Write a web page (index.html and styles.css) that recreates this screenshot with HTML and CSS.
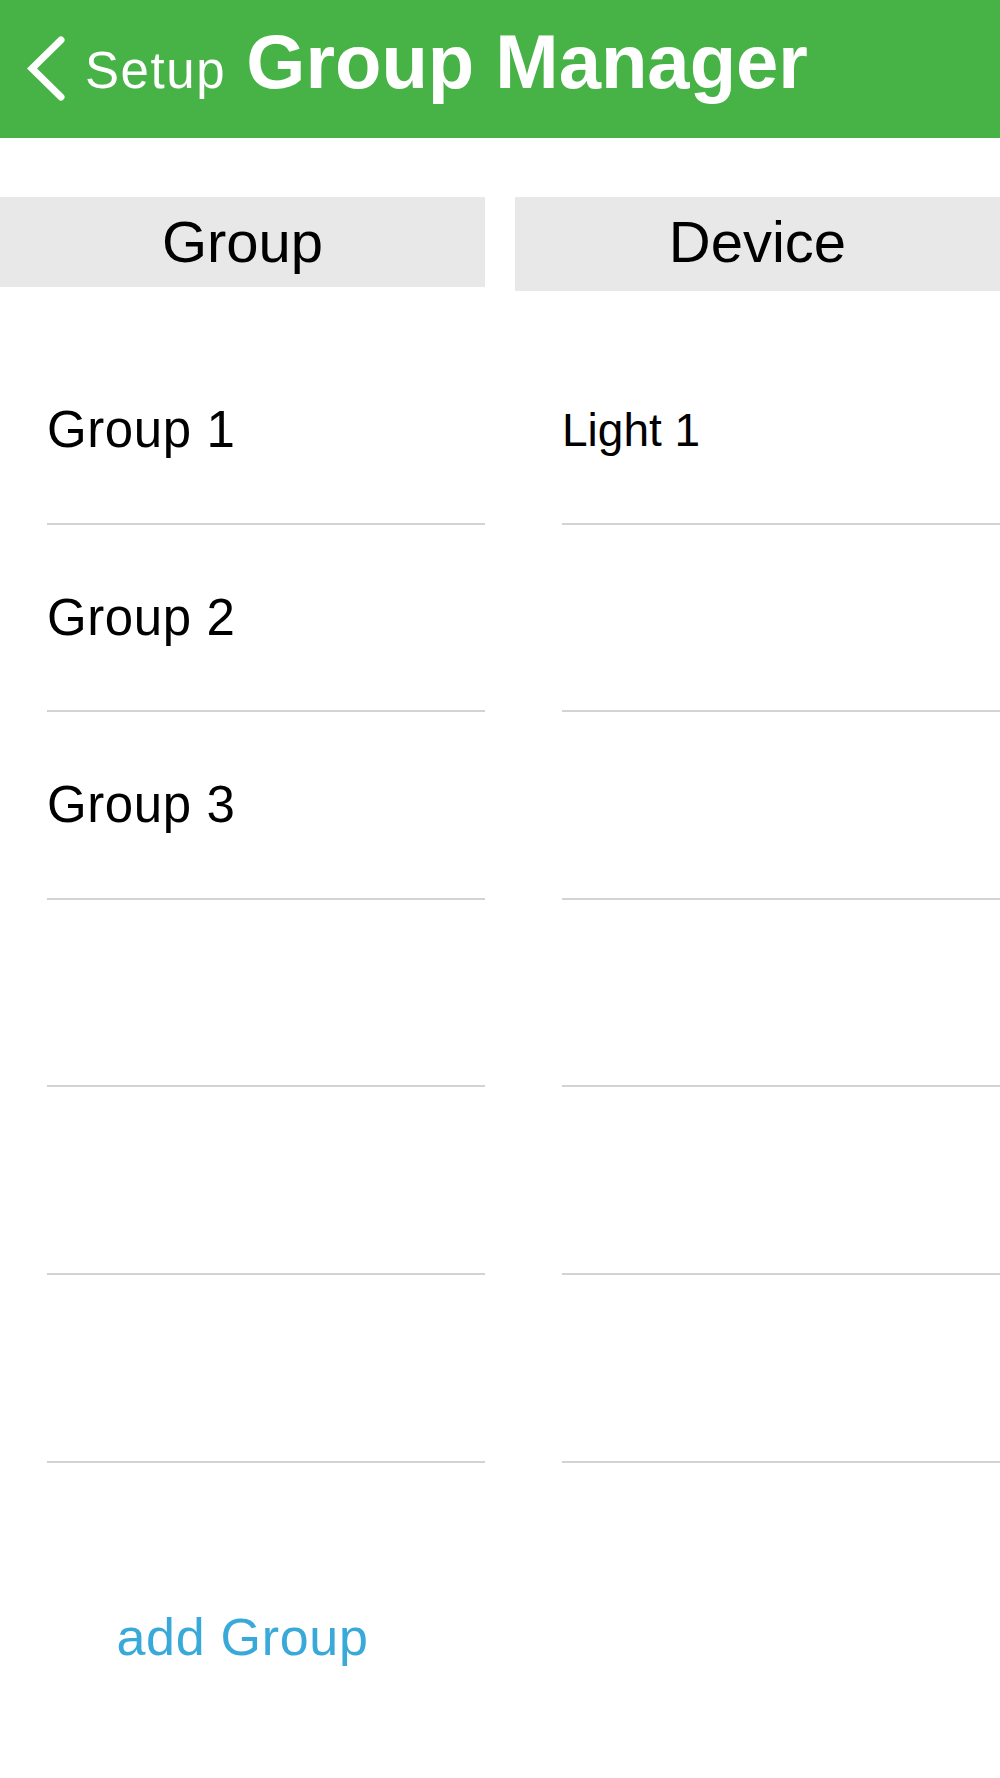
FILE: index.html
```html
<!DOCTYPE html>
<html>
<head>
<meta charset="utf-8">
<link rel="stylesheet" href="styles.css">
</head>
<body>
<header class="navbar">
  <svg class="back-icon" width="50" height="80" viewBox="0 0 50 80">
    <polyline points="41,11 12,39.5 41,68" fill="none" stroke="#ffffff" stroke-width="7" stroke-linecap="round" stroke-linejoin="miter"/>
  </svg>
  <div class="title">
    <span class="back-label">Setup</span><span class="page-title">Group Manager</span>
  </div>
</header>
<main class="columns">
  <section class="column">
    <div class="col-head">Group</div>
    <ul class="list">
      <li class="row group-row">Group 1</li>
      <li class="row group-row">Group 2</li>
      <li class="row group-row">Group 3</li>
      <li class="row group-row"></li>
      <li class="row group-row"></li>
      <li class="row group-row"></li>
    </ul>
    <div class="add-group">add Group</div>
  </section>
  <section class="column">
    <div class="col-head col-head-tall">Device</div>
    <ul class="list">
      <li class="row device-row">Light 1</li>
      <li class="row device-row"></li>
      <li class="row device-row"></li>
      <li class="row device-row"></li>
      <li class="row device-row"></li>
      <li class="row device-row"></li>
    </ul>
  </section>
</main>
</body>
</html>
```

FILE: styles.css
```css
* { box-sizing: border-box; }
html, body {
  margin: 0;
  padding: 0;
  background: #ffffff;
  font-family: "Liberation Sans", Arial, sans-serif;
  color: #000000;
}
.navbar {
  height: 138px;
  background: #47b347;
  display: flex;
  align-items: flex-start;
  color: #ffffff;
}
.back-icon {
  margin-left: 20px;
  margin-top: 29px;
  flex: none;
}
.title {
  margin-top: 24px;
  margin-left: 15px;
  line-height: 76px;
  white-space: nowrap;
}
.back-label {
  font-size: 51px;
  letter-spacing: 1.6px;
}
.page-title {
  font-size: 76px;
  font-weight: bold;
  margin-left: 20px;
}
.columns {
  display: grid;
  grid-template-columns: 485px 485px;
  column-gap: 30px;
  margin-top: 59px;
}
.col-head {
  height: 90px;
  line-height: 90px;
  background: #e8e8e8;
  text-align: center;
  font-size: 58px;
}
.col-head-tall {
  height: 94px;
}
.list {
  list-style: none;
  margin: 50px 0 0 0;
  padding: 0;
}
.column:last-child .list {
  margin-top: 46px;
}
.row {
  height: 187.6px;
  margin-left: 47px;
  border-bottom: 2px solid #d3d3d7;
  display: flex;
  align-items: center;
}
.group-row {
  font-size: 51px;
  letter-spacing: 0.6px;
}
.device-row {
  font-size: 46px;
}
.add-group {
  margin-top: 144px;
  line-height: 60px;
  font-size: 52px;
  letter-spacing: 0.7px;
  color: #38a9d9;
  text-align: center;
}
```
